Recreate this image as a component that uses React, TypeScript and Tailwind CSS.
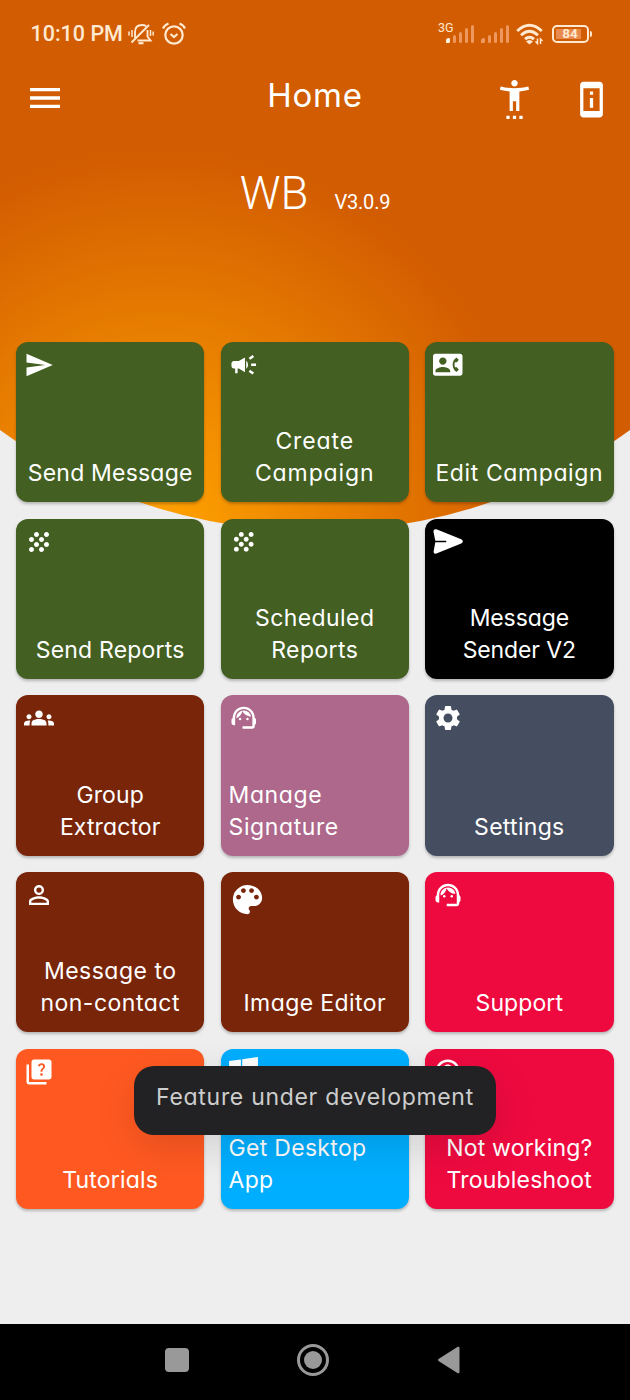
import type { ReactNode } from "react";
import clsx from "clsx";
import { FaWindows } from "react-icons/fa";
import {
  MdCampaign,
  MdColorLens,
  MdContactPhone,
  MdGrain,
  MdGroups,
  MdHelpOutline,
  MdMenu,
  MdPermDeviceInformation,
  MdPersonOutline,
  MdQuiz,
  MdSend,
  MdSettings,
  MdSettingsAccessibility,
  MdSupportAgent,
} from "react-icons/md";

type Tile = {
  lines: string[];
  icon: ReactNode;
  color: string;
  tracking: string;
  // labels are centered unless the tile says otherwise
  left?: boolean;
};

// Rounded paper plane with a notch cut in from the tail.
function PlaneIcon() {
  return (
    <svg viewBox="0 0 30 30" className="size-[30px]" fill="currentColor">
      <path d="M3.4 2.2 28.2 12.2Q31.5 14.4 28.2 16.600L3.4 26.600Q.2 27.300.7 24.100L2.3 15.300H13.2V13.700H2.3L.5 4.800Q.2 1.700 3.4 2.2Z" />
    </svg>
  );
}

const GREEN = "bg-[#435f22]";
const BROWN = "bg-[#79250a]";
const RED = "bg-[#ee0a3f]";

const tiles: Tile[] = [
  { lines: ["Send Message"], icon: <MdSend size={30} />, color: GREEN, tracking: "tracking-[0.2px]" },
  { lines: ["Create", "Campaign"], icon: <MdCampaign size={29.5} />, color: GREEN, tracking: "tracking-[0.9px]" },
  { lines: ["Edit Campaign"], icon: <MdContactPhone size={29.5} />, color: GREEN, tracking: "tracking-[0.6px]" },
  { lines: ["Send Reports"], icon: <MdGrain size={30} />, color: GREEN, tracking: "tracking-[0.2px]" },
  { lines: ["Scheduled", "Reports"], icon: <MdGrain size={29.5} />, color: GREEN, tracking: "tracking-[0.4px]" },
  { lines: ["Message", "Sender V2"], icon: <PlaneIcon />, color: "bg-black", tracking: "tracking-[-0.1px]" },
  { lines: ["Group", "Extractor"], icon: <MdGroups size={30} />, color: BROWN, tracking: "tracking-[0.1px]" },
  { lines: ["Manage", "Signature"], icon: <MdSupportAgent size={29.5} />, color: "bg-[#ad688b]", tracking: "tracking-[0.6px]", left: true },
  { lines: ["Settings"], icon: <MdSettings size={30} />, color: "bg-[#454d60]", tracking: "tracking-[0.3px]" },
  { lines: ["Message to", "non-contact"], icon: <MdPersonOutline size={30} />, color: BROWN, tracking: "tracking-[0.5px]" },
  { lines: ["Image Editor"], icon: <MdColorLens size={39} className="-ml-px" />, color: BROWN, tracking: "tracking-[0.4px]" },
  { lines: ["Support"], icon: <MdSupportAgent size={30} />, color: RED, tracking: "tracking-[0.1px]" },
  { lines: ["Tutorials"], icon: <MdQuiz size={30} />, color: "bg-[#ff5921]", tracking: "tracking-[0.2px]" },
  { lines: ["Get Desktop", "App"], icon: <FaWindows size={33} className="-ml-0.5 -mt-0.5" />, color: "bg-[#00aeff]", tracking: "tracking-[0.3px]", left: true },
  { lines: ["Not working?", "Troubleshoot"], icon: <MdHelpOutline size={29.5} />, color: RED, tracking: "tracking-[0.2px]" },
];

function MutedBell() {
  return (
    <svg viewBox="0 0 26 24" className="h-6 w-[26px]" fill="none" stroke="currentColor" strokeWidth="1.9">
      <path d="M7 16V10q0-7 7-7 2.500 0 4.200 1.200M19.500 8v6.500l3 4H9.500" />
      <path d="M3.500 20.500 21 3" />
      <path d="M10.500 21.200h5" strokeWidth="2.200" />
      <path d="M1 9.500v4M4 8v7M22.500 8v6M25.200 9.500v4" strokeWidth="1.500" />
    </svg>
  );
}

function AlarmIcon() {
  return (
    <svg viewBox="0 0 24 24" className="size-6" fill="none" stroke="currentColor" strokeWidth="2.200">
      <circle cx="12" cy="13" r="8.700" />
      <path d="M8.500 12 12 15l3.500-3" />
      <path d="M1 6.500q1.500-3.500 5.500-5M23 6.500q-1.500-3.500-5.500-5" />
    </svg>
  );
}

function SignalBars({ active }: { active?: boolean }) {
  return (
    <span className="flex h-[18px] items-end gap-[2.500px]">
      <span className={clsx("h-[5px] w-[4px] rounded-tl-sm rounded-r-xs", active ? "bg-[#fff0dc]" : "bg-[#ee985f]")} />
      <span className="h-[8px] w-[3.500px] rounded-xs bg-[#ee985f]" />
      <span className="h-[11px] w-[3.500px] rounded-xs bg-[#ee985f]" />
      <span className="h-[15px] w-[3.500px] rounded-xs bg-[#ee985f]" />
      <span className="h-[18px] w-[3.500px] rounded-xs bg-[#ee985f]" />
    </span>
  );
}

function WifiIcon() {
  return (
    <svg viewBox="0 0 28 22" className="h-[22px] w-7" fill="none" stroke="currentColor" strokeWidth="2.900">
      <path d="M1.200 8Q13.500-3.500 25.800 8" />
      <path d="M5 12.300q8.500-8 17 0" />
      <path d="M9 16.200q4.500-4 9 0" />
      <path d="M10 18.500q3.500-3 7 0L13.500 21.500z" fill="currentColor" stroke="none" />
      <path d="M21.500 15.500v5L19.500 18.500M24.500 21v-5L26.500 18" strokeWidth="1.500" />
    </svg>
  );
}

function StatusBar() {
  return (
    <div className="flex h-[67px] items-center pl-[30.500px] pr-[38px] text-[#ffe9d0]">
      <span className="w-[97px] whitespace-nowrap pt-px font-[Roboto,sans-serif] text-[21.500px] font-medium">10:10 PM</span>
      <MutedBell />
      <span className="ml-[8px]">
        <AlarmIcon />
      </span>
      <div className="ml-auto flex items-center">
        <span className="mb-[11px] w-[8px] whitespace-nowrap font-[Roboto,sans-serif] text-[12.500px] leading-3">3G</span>
        <SignalBars active />
        <span className="ml-[7px]">
          <SignalBars />
        </span>
        <span className="ml-[7px]">
          <WifiIcon />
        </span>
        <span className="ml-[8px] flex h-[18px] w-[37px] rounded-[5px] border-2 border-current p-[2px]">
          <span className="flex w-[25px] items-center justify-center bg-[#e88a4c] pl-[3px] font-[Roboto,sans-serif] text-[13.500px] font-bold leading-none">
            84
          </span>
        </span>
        <span className="ml-px h-[6px] w-[2px] rounded-r bg-current" />
      </div>
    </div>
  );
}

function AppBar() {
  return (
    <header className="mt-px grid h-[60px] grid-cols-[1fr_auto_1fr] items-center pl-[25px] pr-[19px] text-white">
      <MdMenu size={40} />
      <h1 className="-ml-[6px] -mt-1 text-[33px] tracking-[0.800px]">Home</h1>
      <div className="flex items-center justify-end gap-[38px] pt-0.5">
        <MdSettingsAccessibility size={39} />
        <MdPermDeviceInformation size={39} />
      </div>
    </header>
  );
}

function TileCard({ lines, icon, color, tracking, left }: Tile) {
  return (
    <button
      className={clsx(
        "flex flex-col justify-between rounded-xl p-2 pb-[13px] text-white shadow-[0_2px_3px_rgba(0,0,0,0.240)]",
        color,
      )}
    >
      <span className="h-10">{icon}</span>
      <span
        className={clsx(
          "w-full whitespace-nowrap text-[23px] leading-8",
          tracking,
          left ? "text-left" : "text-center",
        )}
      >
        {lines.map((line) => (
          <span key={line} className="block">
            {line}
          </span>
        ))}
      </span>
    </button>
  );
}

function NavBar() {
  return (
    <nav className="flex h-[76px] items-center bg-black pb-[4px] pl-[165px] text-[#999]">
      <span className="size-[23.500px] rounded-[4px] bg-current" />
      <span className="ml-[108.500px] flex size-8 items-center justify-center rounded-full border-[3px] border-current">
        <span className="size-[18px] rounded-full bg-current" />
      </span>
      <svg viewBox="0 0 22 28" className="ml-[109px] h-7 w-[22px]" fill="currentColor">
        <path d="M.5 13Q-.3 14 .5 15L19.800 27.200Q21.300 27.800 21.500 26V2Q21.300.2 19.800.8Z" />
      </svg>
    </nav>
  );
}

export default function App() {
  return (
    <div className="relative isolate flex h-[1400px] w-[630px] flex-col overflow-hidden bg-[#eee] font-[Inter,sans-serif] [font-feature-settings:'cv11']">
      {/* glowing backdrop with a curved lower edge */}
      <div className="absolute inset-x-0 top-0 -z-10 h-[532px] bg-[radial-gradient(circle_375px_at_160px_525px,#ffa200,#d25c01)] [clip-path:circle(540px_at_315px_-8.500px)]" />

      <StatusBar />
      <AppBar />

      <div className="flex h-[214px] items-baseline justify-center gap-[26px] pt-[32px] font-[Roboto,sans-serif] text-white">
        <span className="text-[45.500px] font-[350]">WB</span>
        <span className="text-[20px] tracking-[-0.200px]">V3.0.9</span>
      </div>

      <main className="grid grid-cols-3 auto-rows-[160.300px] gap-x-[16.200px] gap-y-[16.400px] pl-4 pr-[16.500px]">
        {tiles.map((tile) => (
          <TileCard key={tile.lines[0]} {...tile} />
        ))}
      </main>

      <div className="absolute left-[134px] top-[1066px] flex h-[68.500px] w-[362px] justify-center whitespace-nowrap rounded-[20px] bg-[#222224] pt-[15px] text-[23px] leading-8 tracking-[0.700px] text-[#cdcdcd] shadow-[0_12px_40px_rgba(0,0,0,0.120)]">
        Feature under development
      </div>

      <div className="mt-auto">
        <NavBar />
      </div>
    </div>
  );
}
